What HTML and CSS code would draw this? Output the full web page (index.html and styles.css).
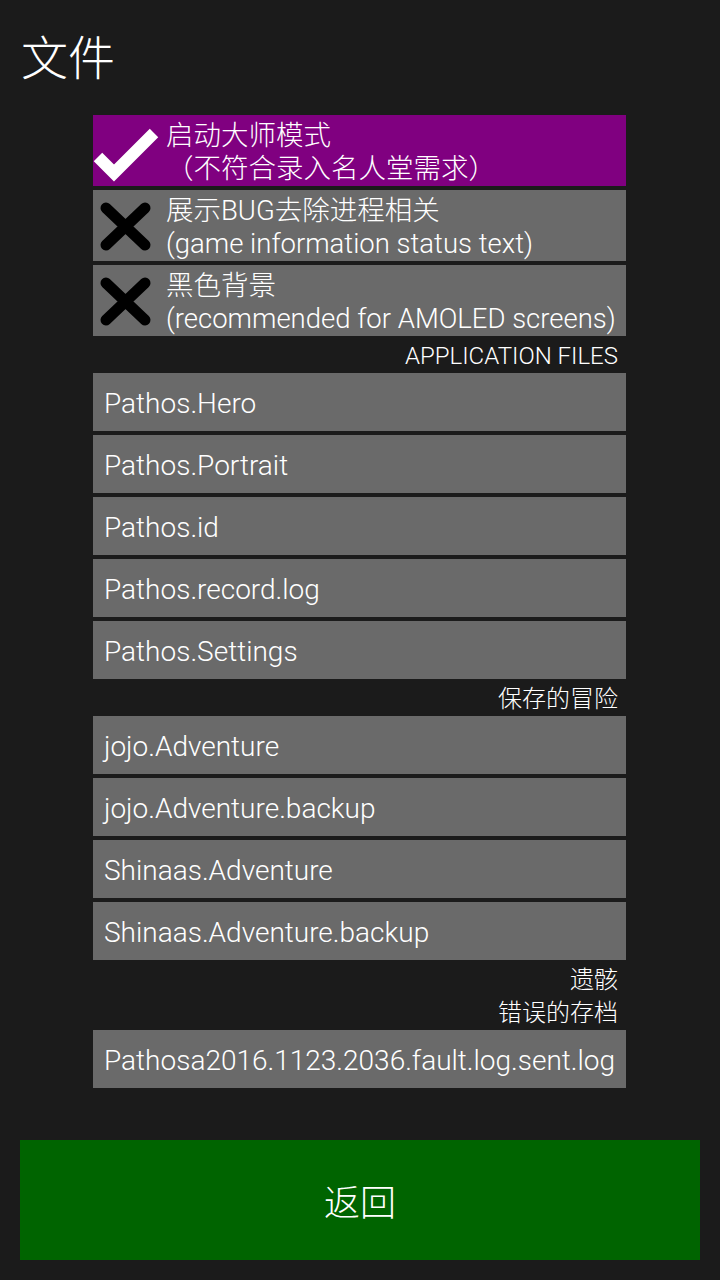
FILE: index.html
```html
<!DOCTYPE html>
<html lang="zh">
<head>
<meta charset="utf-8">
<link rel="stylesheet" href="styles.css">
</head>
<body>
<div class="screen">
  <h1 class="title">文件</h1>
  <div class="panel">
    <div class="option on">
      <svg class="icon" viewBox="0 0 70 71"><path d="M5 42 L21 58 L61 18" fill="none" stroke="#fff" stroke-width="12" stroke-linecap="butt" stroke-linejoin="miter"/></svg>
      <div class="opt-text">启动大师模式<br>（不符合录入名人堂需求）</div>
    </div>
    <div class="option">
      <svg class="icon" viewBox="0 0 70 71"><path d="M13 18 L52 55 M52 18 L13 55" fill="none" stroke="#000" stroke-width="11" stroke-linecap="round"/></svg>
      <div class="opt-text">展示BUG去除进程相关<br>(game information status text)</div>
    </div>
    <div class="option">
      <svg class="icon" viewBox="0 0 70 71"><path d="M13 18 L52 55 M52 18 L13 55" fill="none" stroke="#000" stroke-width="11" stroke-linecap="round"/></svg>
      <div class="opt-text">黑色背景<br>(recommended for AMOLED screens)</div>
    </div>
    <div class="header">APPLICATION FILES</div>
    <div class="row">Pathos.Hero</div>
    <div class="row">Pathos.Portrait</div>
    <div class="row">Pathos.id</div>
    <div class="row">Pathos.record.log</div>
    <div class="row">Pathos.Settings</div>
    <div class="header">保存的冒险</div>
    <div class="row">jojo.Adventure</div>
    <div class="row">jojo.Adventure.backup</div>
    <div class="row">Shinaas.Adventure</div>
    <div class="row">Shinaas.Adventure.backup</div>
    <div class="header">遗骸</div>
    <div class="header">错误的存档</div>
    <div class="row">Pathosa2016.1123.2036.fault.log.sent.log</div>
  </div>
  <div class="back">返回</div>
</div>
</body>
</html>
```
FILE: styles.css
```css
html, body {
  margin: 0;
  padding: 0;
  background: #1b1b1b;
}
body {
  width: 720px;
  height: 1280px;
  overflow: hidden;
  font-family: Roboto, "Noto Sans CJK SC", sans-serif;
  font-weight: 300;
  color: #fff;
}
.screen {
  display: flex;
  flex-direction: column;
}
.title {
  margin: 0;
  height: 115px;
  box-sizing: border-box;
  padding: 22px 0 0 21px;
  font-family: "Noto Sans CJK SC", sans-serif;
  font-weight: 300;
  font-size: 47px;
  line-height: 66px;
}
.panel {
  width: 533px;
  margin-left: 93px;
  display: flex;
  flex-direction: column;
}
.option {
  height: 71px;
  margin-bottom: 4px;
  background: #6a6a6a;
  display: flex;
  align-items: center;
}
.option.on {
  background: #800080;
}
.icon {
  width: 70px;
  height: 71px;
  flex: none;
}
.opt-text {
  margin-left: 3px;
  padding-top: 3px;
  font-size: 27.5px;
  line-height: 33px;
  white-space: nowrap;
}
.header {
  height: 33px;
  line-height: 33px;
  text-align: right;
  padding-right: 8px;
  font-size: 24px;
}
.row {
  height: 58px;
  margin-bottom: 4px;
  background: #6a6a6a;
  box-sizing: border-box;
  padding-left: 11px;
  padding-top: 2px;
  line-height: 58px;
  font-size: 28px;
  white-space: nowrap;
}
.back {
  margin: 48px 20px 0 20px;
  height: 120px;
  background: #006400;
  display: flex;
  align-items: center;
  justify-content: center;
  font-family: "Noto Sans CJK SC", sans-serif;
  font-size: 36px;
}
```
